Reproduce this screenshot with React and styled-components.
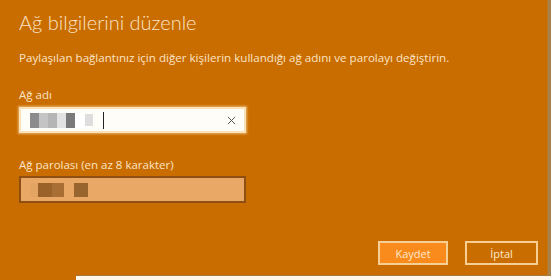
import React from 'react';
import styled, { createGlobalStyle } from 'styled-components';

const GlobalStyle = createGlobalStyle`
  html, body {
    margin: 0;
    padding: 0;
    background: #c96d00;
  }
  * {
    box-sizing: border-box;
  }
`;

const Screen = styled.div`
  width: 551px;
  height: 280px;
  display: flex;
  flex-direction: column;
  background: #c96d00;
  overflow: hidden;
  font-family: "Open Sans", "Noto Sans", sans-serif;
  color: #fbe4c6;
`;

const Body = styled.div`
  flex: 1;
  display: flex;
`;

const Dialog = styled.div`
  flex: 1;
  display: flex;
  flex-direction: column;
  padding: 8px 9px 0 19px;
`;

const RightEdge = styled.div`
  width: 4px;
  background: #a8814a;
  border-left: 1px solid #b87a2a;
`;

const Title = styled.h1`
  margin: 0;
  font-family: Lato, "Open Sans", sans-serif;
  font-size: 20px;
  font-weight: 300;
  line-height: 28px;
`;

const Subtitle = styled.p`
  margin: 15px 0 0;
  font-size: 11.6px;
  line-height: 14px;
`;

const Label = styled.div`
  margin-top: ${p => p.$gap}px;
  font-size: 11.5px;
  line-height: 14px;
`;

const Field = styled.div`
  margin-top: ${p => p.$gap}px;
  width: 227px;
  height: ${p => p.$h || 26}px;
  display: flex;
  align-items: center;
  padding: 0 8px 0 9px;
  background: ${p => (p.$active ? '#fffdf8' : '#e9a866')};
  border: 2px solid ${p => (p.$active ? '#fbe0b8' : '#8f4f12')};
  box-shadow: ${p => (p.$active ? '0 0 2px 1px rgba(255, 226, 180, 0.6)' : 'none')};
`;

const Mosaic = styled.div`
  display: flex;
  align-items: center;
`;

const Cell = styled.span`
  display: block;
  width: ${p => p.$w}px;
  height: ${p => p.$h || 15}px;
  background: ${p => p.$c};
`;

const Caret = styled.span`
  display: block;
  width: 1px;
  height: 17px;
  margin-left: 10px;
  background: #222;
`;

const Spacer = styled.div`
  flex: 1;
`;

const ClearIcon = styled.svg`
  width: 9px;
  height: 9px;
  display: block;
`;

const Actions = styled.div`
  margin-top: auto;
  margin-bottom: 10px;
  display: flex;
  justify-content: flex-end;
  gap: 17px;
`;

const Button = styled.button`
  width: ${p => p.$w}px;
  height: 24px;
  padding: 0;
  font-family: "Open Sans", "Noto Sans", sans-serif;
  font-size: 11px;
  color: #fde9cc;
  background: ${p => (p.$primary ? '#f98a1c' : '#c96d00')};
  border: 2px solid #f7cf92;
`;

const Bottom = styled.div`
  height: 5px;
  display: flex;
`;

const BottomGap = styled.div`
  width: 76px;
  background: #c96d00;
`;

const BottomBar = styled.div`
  flex: 1;
  background: #fff8ea;
  border-top: 1px solid #a9783c;
`;

const nameCells = [
  { w: 9, c: '#8c8c8c' },
  { w: 9, c: '#c4c4c4' },
  { w: 9, c: '#b5b5b5' },
  { w: 9, c: '#e2e2e2' },
  { w: 9, c: '#7a7a7a' },
];

export default function App() {
  return (
    <Screen>
      <GlobalStyle />
      <Body>
        <Dialog>
          <Title>Ağ bilgilerini düzenle</Title>
          <Subtitle>
            Paylaşılan bağlantınız için diğer kişilerin kullandığı ağ adını ve parolayı değiştirin.
          </Subtitle>
          <Label $gap={23}>Ağ adı</Label>
          <Field $active $gap={5}>
            <Mosaic>
              {nameCells.map((c, i) => (
                <Cell key={i} $w={c.w} $c={c.c} />
              ))}
              <Cell $w={10} $c="#ffffff" />
              <Cell $w={8} $c="#dedede" $h={12} />
            </Mosaic>
            <Caret />
            <Spacer />
            <ClearIcon viewBox="0 0 10 10">
              <path d="M1 1 L9 9 M9 1 L1 9" stroke="#555" strokeWidth="1.1" fill="none" />
            </ClearIcon>
          </Field>
          <Label $gap={25}>Ağ parolası (en az 8 karakter)</Label>
          <Field $gap={4} $h={27}>
            <Mosaic>
              <Cell $w={8} $c="#e3a464" $h={14} />
              <Cell $w={14} $c="#9a6128" $h={14} />
              <Cell $w={12} $c="#a86e34" $h={14} />
              <Cell $w={10} $c="#e9a866" $h={14} />
              <Cell $w={14} $c="#98652e" $h={14} />
            </Mosaic>
          </Field>
          <Actions>
            <Button $primary $w={70}>Kaydet</Button>
            <Button $w={73}>İptal</Button>
          </Actions>
        </Dialog>
        <RightEdge />
      </Body>
      <Bottom>
        <BottomGap />
        <BottomBar />
      </Bottom>
    </Screen>
  );
}
